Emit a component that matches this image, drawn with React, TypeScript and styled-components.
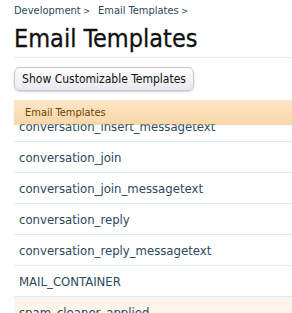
import React from "react";
import styled, { createGlobalStyle } from "styled-components";

const Global = createGlobalStyle`
  html, body { margin: 0; padding: 0; background: #fff; overflow: hidden; }
  body { font-family: "DejaVu Sans Condensed", "DejaVu Sans", sans-serif; font-stretch: condensed; }
`;

const Page = styled.div`
  padding: 0 0 0 14px;
  width: 320px;
`;

const Breadcrumb = styled.nav`
  display: flex;
  gap: 8px;
  height: 21px;
  align-items: center;
  font-size: 11px;
  color: #2b485c;
`;

const Crumb = styled.span`
  &::after { content: " >"; font-size: 9px; }
`;

const Title = styled.h1`
  margin: 0;
  font-size: 25px;
  font-weight: normal;
  color: #111;
  line-height: 36px;
  height: 36px;
  border-bottom: 1px solid #d7edfc;
  -webkit-text-stroke: 0.3px #111;
`;

const Toolbar = styled.div`
  padding: 9px 0 9px;
  display: flex;
`;

const Button = styled.button`
  font-family: inherit;
  font-stretch: condensed;
  font-size: 12px;
  color: #111;
  height: 24px;
  width: 180px;
  white-space: nowrap;
  padding: 0 6px;
  border: 1px solid #c8c8d0;
  border-radius: 6px;
  background: linear-gradient(#ffffff, #e8e8ef);
  box-shadow: 0 1px 2px rgba(0,0,0,0.2);
  text-align: center;
`;

const HeaderBar = styled.div`
  position: relative;
  z-index: 1;
  height: 24px;
  margin-bottom: -13px;
  padding-left: 11px;
  display: flex;
  align-items: center;
  font-size: 11px;
  color: #6d3f03;
  background: linear-gradient(#fde6c6, #f9d7a9);
  box-shadow: 0 1px 1px rgba(200,160,110,0.4);
`;

const List = styled.ul`
  list-style: none;
  margin: 0;
  padding: 0;
`;

const Row = styled.li<{ $hl?: boolean }>`
  height: 30px;
  border-bottom: 1px solid #d7edfc;
  padding-left: 5px;
  display: flex;
  align-items: center;
  font-size: 13px;
  color: #2b485c;
  background: ${(p) => (p.$hl ? "#fef4ea" : "#fff")};
`;

const rows = [
  "conversation_insert_messagetext",
  "conversation_join",
  "conversation_join_messagetext",
  "conversation_reply",
  "conversation_reply_messagetext",
  "MAIL_CONTAINER",
  "spam_cleaner_applied",
];

export default function App() {
  return (
    <Page>
      <Global />
      <Breadcrumb>
        <Crumb>Development</Crumb>
        <Crumb>Email Templates</Crumb>
      </Breadcrumb>
      <Title>Email Templates</Title>
      <Toolbar>
        <Button>Show Customizable Templates</Button>
      </Toolbar>
      <HeaderBar>Email Templates</HeaderBar>
      <List>
        {rows.map((r, i) => (
          <Row key={r} $hl={i === rows.length - 1}>{r}</Row>
        ))}
      </List>
    </Page>
  );
}
